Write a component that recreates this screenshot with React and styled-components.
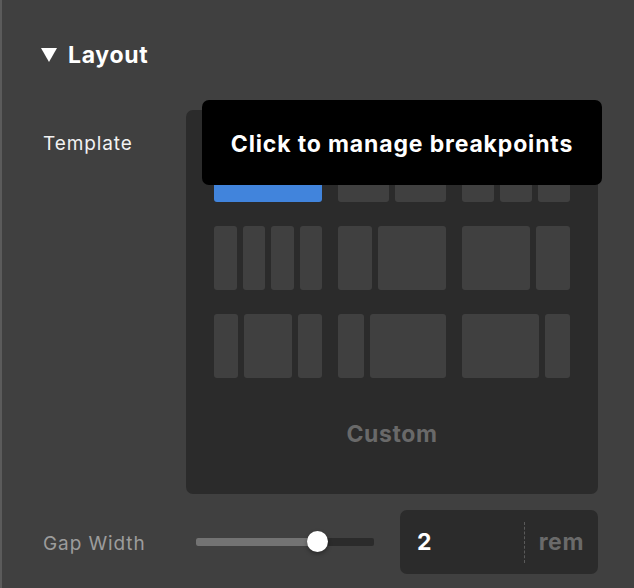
import React from 'react';
import styled, { createGlobalStyle } from 'styled-components';

const GlobalStyle = createGlobalStyle`
  html, body {
    margin: 0;
    padding: 0;
    background: #404040;
  }
  body {
    font-family: Inter, "Noto Sans", "Liberation Sans", sans-serif;
  }
`;

const Sidebar = styled.div`
  width: 634px;
  height: 588px;
  box-sizing: border-box;
  background: #404040;
  border-left: 2px solid #5b5b5b;
  padding: 41px 36px 0 39px;
  overflow: hidden;
`;

const SectionHeader = styled.div`
  display: flex;
  align-items: center;
  gap: 11px;
  height: 28px;
  color: #ffffff;
  font-size: 23px;
  font-weight: 700;
  letter-spacing: 0.7px;
`;

const Caret = styled.span`
  width: 0;
  height: 0;
  border-left: 8px solid transparent;
  border-right: 8px solid transparent;
  border-top: 14px solid #ffffff;
`;

const Field = styled.div`
  display: flex;
  align-items: ${(p) => p.$align || 'center'};
  margin-top: ${(p) => p.$top || 0}px;
`;

const Label = styled.div`
  width: 143px;
  padding-left: 2px;
  flex-shrink: 0;
  font-size: 19px;
  color: ${(p) => (p.$muted ? '#9c9c9c' : '#f2f2f2')};
  padding-top: ${(p) => p.$pt || 0}px;
  letter-spacing: 0.9px;
`;

const Panel = styled.div`
  position: relative;
  width: 412px;
  box-sizing: border-box;
  padding: 28px 28px 0;
  background: #2b2b2b;
  border-radius: 7px;
`;

const Tooltip = styled.div`
  position: absolute;
  left: 16px;
  top: -10px;
  width: 400px;
  height: 85px;
  box-sizing: border-box;
  padding-top: 3px;
  display: flex;
  align-items: center;
  justify-content: center;
  background: #000000;
  border-radius: 7px;
  color: #ffffff;
  font-size: 23px;
  font-weight: 700;
  letter-spacing: 0.85px;
  z-index: 2;
`;

const TemplateGrid = styled.div`
  display: grid;
  grid-template-columns: repeat(3, 108px);
  column-gap: 16px;
  row-gap: 24px;
`;

const Option = styled.div`
  display: flex;
  gap: 6px;
  height: 64px;
`;

const Column = styled.div`
  flex: ${(p) => p.$grow} 1 0;
  border-radius: 3px;
  background: ${(p) => (p.$active ? '#4184dc' : '#404040')};
`;

const CustomButton = styled.div`
  height: 112px;
  padding-bottom: 4px;
  display: flex;
  align-items: center;
  justify-content: center;
  color: #696969;
  font-size: 23px;
  font-weight: 700;
  letter-spacing: 0.6px;
`;

const SliderTrack = styled.div`
  position: relative;
  width: 178px;
  height: 8px;
  margin: 0 26px 0 10px;
  border-radius: 2px;
  background: #2b2b2b;
`;

const SliderFill = styled.div`
  height: 100%;
  border-radius: 2px 0 0 2px;
  background: #737373;
`;

const SliderThumb = styled.div`
  position: absolute;
  top: 50%;
  width: 21px;
  height: 21px;
  margin: -11px 0 0 -10px;
  border-radius: 50%;
  background: #ffffff;
  box-shadow: 0 2px 4px rgba(0, 0, 0, 0.35);
`;

const UnitInput = styled.div`
  width: 198px;
  height: 64px;
  box-sizing: border-box;
  display: flex;
  align-items: center;
  background: #2b2b2b;
  border-radius: 7px;
  padding: 0 14px 0 17px;
  font-size: 23px;
  font-weight: 700;
  letter-spacing: 0.6px;
`;

const Value = styled.div`
  flex: 1;
  color: #ffffff;
`;

const Divider = styled.div`
  align-self: stretch;
  margin: 12px 14px 11px 0;
  border-left: 1px dashed #5a5a5a;
`;

const Unit = styled.div`
  color: #6a6a6a;
`;

const templates = [
  [[1]],
  [[1], [1]],
  [[1], [1], [1]],
  [[1], [1], [1], [1]],
  [[1], [2]],
  [[2], [1]],
  [[1], [2], [1]],
  [[1], [3]],
  [[3], [1]],
];

const gap = 2;
const gapPercent = 68;

export default function App() {
  return (
    <>
      <GlobalStyle />
      <Sidebar>
        <SectionHeader>
          <Caret />
          Layout
        </SectionHeader>
        <Field $align="flex-start" $top={41}>
          <Label $pt={22}>Template</Label>
          <Panel>
            <Tooltip>Click to manage breakpoints</Tooltip>
            <TemplateGrid>
              {templates.map((cols, i) => (
                <Option key={i}>
                  {cols.map(([grow], j) => (
                    <Column key={j} $grow={grow} $active={i === 0} />
                  ))}
                </Option>
              ))}
            </TemplateGrid>
            <CustomButton>Custom</CustomButton>
          </Panel>
        </Field>
        <Field $top={16}>
          <Label $muted $pt={2}>Gap Width</Label>
          <SliderTrack>
            <SliderFill style={{ width: `${gapPercent}%` }} />
            <SliderThumb style={{ left: `${gapPercent}%` }} />
          </SliderTrack>
          <UnitInput>
            <Value>{gap}</Value>
            <Divider />
            <Unit>rem</Unit>
          </UnitInput>
        </Field>
      </Sidebar>
    </>
  );
}
